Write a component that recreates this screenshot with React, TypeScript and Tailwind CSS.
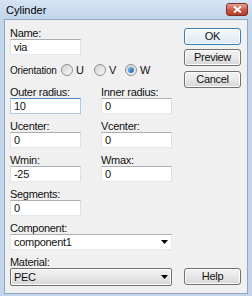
import React from 'react';

const font = { fontFamily: '"Liberation Sans", Arial, sans-serif' };

const Label: React.FC<{ text: string }> = ({ text }) => (
  <div className="h-[12px] leading-[12px] text-[11px] tracking-[-0.3px] text-[#111] whitespace-nowrap">{text}</div>
);

const Edit: React.FC<{ value: string; focused?: boolean }> = ({ value, focused }) => (
  <div
    className={`h-[16px] w-[71px] bg-white border pl-[3px] text-[11px] tracking-[-0.3px] leading-[14px] text-[#111] ${
      focused
        ? 'border-[#a9cbe8] border-t-[#4e8bc6]'
        : 'border-[#e3e9ef] border-t-[#abadb3] border-l-[#e2e3ea] border-r-[#dbdfe6]'
    }`}
  >
    {value}
  </div>
);

const Field: React.FC<{ label: string; value: string; focused?: boolean }> = ({ label, value, focused }) => (
  <div className="flex flex-col">
    <Label text={label} />
    <Edit value={value} focused={focused} />
  </div>
);

const Radio: React.FC<{ label: string; checked?: boolean }> = ({ label, checked }) => (
  <div className="flex items-center gap-[3px]">
    <div className="w-[12px] h-[12px] rounded-full border border-[#8e8f8f] bg-gradient-to-br from-[#d4d4d4] to-[#f8f8f8] flex items-center justify-center">
      {checked && <div className="w-[6px] h-[6px] rounded-full bg-gradient-to-br from-[#7cc1ee] to-[#1b5fb0]" />}
    </div>
    <span className="text-[11px] leading-[12px] text-[#111]">{label}</span>
  </div>
);

const Button: React.FC<{ label: string; def?: boolean }> = ({ label, def }) => (
  <div
    className={`h-[17px] w-[57px] rounded-[3px] border flex items-center justify-center text-[11px] tracking-[-0.3px] text-[#111] shadow-[inset_0_0_0_1px_#fcfcfc] ${
      def
        ? 'border-[#3c7fb1] bg-gradient-to-b from-[#f4f9fd] to-[#dfe9f2]'
        : 'border-[#707070] bg-gradient-to-b from-[#f2f2f2] via-[#e8e8e8] to-[#d6d6d6]'
    }`}
  >
    {label}
  </div>
);

const Arrow = () => (
  <svg width="7" height="4" viewBox="0 0 7 4" className="shrink-0">
    <path d="M0 0 H7 L3.5 4 Z" fill="#000" />
  </svg>
);

export default function App() {
  return (
    <div style={font} className="w-[252px] h-[296px] bg-[#c2d5ea] flex flex-col overflow-hidden">
      {/* title bar */}
      <div className="h-[19px] shrink-0 bg-gradient-to-b from-[#d6e4f4] to-[#c2d5ea] flex items-center justify-between pl-[6px] pr-[4px]">
        <span className="text-[11px] text-black leading-[14px]">Cylinder</span>
        <div className="w-[22px] h-[13px] rounded-[3px] border border-[#7b302a] bg-gradient-to-b from-[#e3a394] via-[#cf5a48] to-[#b6392a] flex items-center justify-center">
          <svg width="9" height="7" viewBox="0 0 9 7">
            <path d="M1 0.5 L8 6.5 M8 0.5 L1 6.5" stroke="#fff" strokeWidth="2" />
          </svg>
        </div>
      </div>

      {/* client */}
      <div className="ml-[4px] mr-[4px] h-[275px] border border-[#8fa7c2] bg-[#f0f0f0] flex pl-[5px] pt-[7px]">
        <div className="w-[162px] flex flex-col">
          <Field label="Name:" value="via" />
          <div className="mt-[7px] h-[16px] flex items-center">
            <span className="text-[10px] tracking-[-0.2px] text-[#111] w-[51px] whitespace-nowrap">Orientation</span>
            <div className="w-[33px]"><Radio label="U" /></div>
            <div className="w-[31px]"><Radio label="V" /></div>
            <Radio label="W" checked />
          </div>
          <div className="mt-[8px] grid grid-cols-2 gap-x-[20px] gap-y-[6px]">
            <Field label="Outer radius:" value="10" focused />
            <Field label="Inner radius:" value="0" />
            <Field label="Ucenter:" value="0" />
            <Field label="Vcenter:" value="0" />
            <Field label="Wmin:" value="-25" />
            <Field label="Wmax:" value="0" />
            <Field label="Segments:" value="0" />
          </div>
          <div className="mt-[6px]">
            <Label text="Component:" />
            <div className="h-[16px] bg-white border border-[#e3e9ef] border-t-[#abadb3] flex items-center justify-between pl-[3px] pr-[3px] text-[11px] tracking-[-0.3px] text-[#111]">
              <span>component1</span>
              <Arrow />
            </div>
          </div>
          <div className="mt-[6px]">
            <Label text="Material:" />
            <div className="h-[18px] rounded-[2px] border border-[#707070] bg-gradient-to-b from-[#f2f2f2] via-[#e8e8e8] to-[#d6d6d6] shadow-[inset_0_0_0_1px_#fcfcfc] flex items-center justify-between pl-[3px] pr-[3px] text-[11px] tracking-[-0.3px] text-[#111]">
              <span>PEC</span>
              <Arrow />
            </div>
          </div>
        </div>

        <div className="ml-[12px] flex flex-col pt-[1px] pb-[8px]">
          <Button label="OK" def />
          <div className="mt-[4px]"><Button label="Preview" /></div>
          <div className="mt-[5px]"><Button label="Cancel" /></div>
          <div className="mt-auto"><Button label="Help" /></div>
        </div>
      </div>
    </div>
  );
}
